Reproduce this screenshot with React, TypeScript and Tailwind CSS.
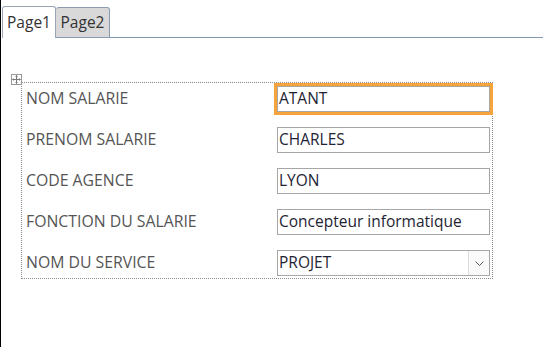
import React from "react";

const rows = [
  { label: "NOM SALARIE", value: "ATANT", focused: true },
  { label: "PRENOM SALARIE", value: "CHARLES" },
  { label: "CODE AGENCE", value: "LYON" },
  { label: "FONCTION DU SALARIE", value: "Concepteur informatique" },
  { label: "NOM DU SERVICE", value: "PROJET", select: true },
];

const MoveHandle = () => (
  <div className="absolute -left-[11px] -top-[9px] flex h-[11px] w-[11px] items-center justify-center border border-[#9a9a9a] bg-white">
    <svg width="9" height="9" viewBox="0 0 9 9" fill="none" stroke="#7a7a7a" strokeWidth="1">
      <path d="M4.5 0.5v8M0.5 4.5h8" />
      <path d="M3.5 1.5l1-1 1 1M3.5 7.5l1 1 1-1M1.5 3.5l-1 1 1 1M7.5 3.5l1 1-1 1" />
    </svg>
  </div>
);

const App = () => {
  return (
    <div
      className="h-[347px] w-[543px] overflow-hidden border-l border-black bg-white"
      style={{ fontFamily: '"Open Sans", "Noto Sans", sans-serif' }}
    >
      <div className="flex h-[38px] items-end pl-[1px]">
        <div className="flex h-[32px] w-[54px] items-center justify-center rounded-t-[3px] border border-b-0 border-[#9aa6b8] bg-white text-[15.5px] text-[#333]">
          Page1
        </div>
        <div className="flex h-[31px] w-[54px] items-center justify-center rounded-t-[3px] border border-l-0 border-[#8c9ab0] bg-[#d9d9d9] text-[15.5px] text-[#333]">
          Page2
        </div>
        <div className="h-[1px] flex-1 bg-[#8497b0]" />
      </div>

      <div className="relative ml-[20px] mt-[44px] h-[197px] w-[472px] border border-dotted border-[#8a8a8a] pb-[2px] pt-[3px]">
        <MoveHandle />
        <div className="flex flex-col gap-[15px]">
          {rows.map((r) => (
            <div key={r.label} className="flex h-[26px] items-center">
              <div className="w-[255px] pl-[4px] text-[15.8px] leading-none text-[#555]">{r.label}</div>
              <div
                className={
                  r.focused
                    ? "flex h-[26px] w-[213px] items-center border border-[#a6a6a6] pl-[1px] text-[15.5px] text-[#1e2433] outline-[3px] outline-[#f7a33c] outline-solid"
                    : "flex h-[26px] w-[213px] items-center border border-[#a6a6a6] pl-[1px] text-[15.5px] text-[#1e2433]"
                }
              >
                <span className="flex-1 leading-none">{r.value}</span>
                {r.select && (
                  <div className="flex h-[24px] w-[21px] items-center justify-center border-l border-[#dcdcdc] bg-[#fafafa]">
                    <svg width="9" height="5" viewBox="0 0 9 5" fill="none" stroke="#555" strokeWidth="1">
                      <path d="M0.5 0.5l4 4 4-4" />
                    </svg>
                  </div>
                )}
              </div>
            </div>
          ))}
        </div>
      </div>
    </div>
  );
};

export default App;
